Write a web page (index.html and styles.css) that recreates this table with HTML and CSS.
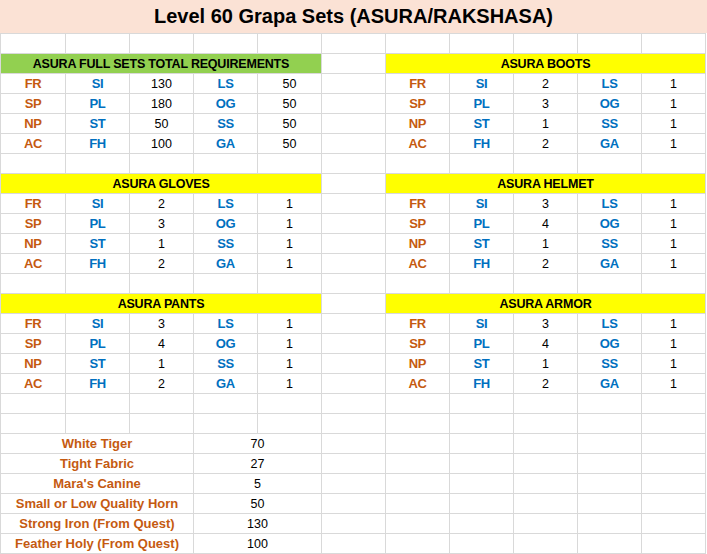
FILE: index.html
```html
<!DOCTYPE html>
<html>
<head>
<meta charset="utf-8">
<title>Level 60 Grapa Sets</title>
<link rel="stylesheet" href="styles.css">
</head>
<body>
<div class="title">Level 60 Grapa Sets (ASURA/RAKSHASA)</div>
<div class="sheet">
  <!-- row 2 -->
  <div></div><div></div><div></div><div></div><div></div><div></div><div></div><div></div><div></div><div></div><div></div>
  <!-- row 3 -->
  <div class="hd green">ASURA FULL SETS TOTAL REQUIREMENTS</div><div></div><div class="hd yellow">ASURA BOOTS</div>
  <!-- rows 4-7 -->
  <div class="k">FR</div><div class="b">SI</div><div class="n">130</div><div class="b">LS</div><div class="n">50</div><div></div><div class="k">FR</div><div class="b">SI</div><div class="n">2</div><div class="b">LS</div><div class="n">1</div>
  <div class="k">SP</div><div class="b">PL</div><div class="n">180</div><div class="b">OG</div><div class="n">50</div><div></div><div class="k">SP</div><div class="b">PL</div><div class="n">3</div><div class="b">OG</div><div class="n">1</div>
  <div class="k">NP</div><div class="b">ST</div><div class="n">50</div><div class="b">SS</div><div class="n">50</div><div></div><div class="k">NP</div><div class="b">ST</div><div class="n">1</div><div class="b">SS</div><div class="n">1</div>
  <div class="k">AC</div><div class="b">FH</div><div class="n">100</div><div class="b">GA</div><div class="n">50</div><div></div><div class="k">AC</div><div class="b">FH</div><div class="n">2</div><div class="b">GA</div><div class="n">1</div>
  <!-- row 8 -->
  <div></div><div></div><div></div><div></div><div></div><div></div><div></div><div></div><div></div><div></div><div></div>
  <!-- row 9 -->
  <div class="hd yellow">ASURA GLOVES</div><div></div><div class="hd yellow">ASURA HELMET</div>
  <!-- rows 10-13 -->
  <div class="k">FR</div><div class="b">SI</div><div class="n">2</div><div class="b">LS</div><div class="n">1</div><div></div><div class="k">FR</div><div class="b">SI</div><div class="n">3</div><div class="b">LS</div><div class="n">1</div>
  <div class="k">SP</div><div class="b">PL</div><div class="n">3</div><div class="b">OG</div><div class="n">1</div><div></div><div class="k">SP</div><div class="b">PL</div><div class="n">4</div><div class="b">OG</div><div class="n">1</div>
  <div class="k">NP</div><div class="b">ST</div><div class="n">1</div><div class="b">SS</div><div class="n">1</div><div></div><div class="k">NP</div><div class="b">ST</div><div class="n">1</div><div class="b">SS</div><div class="n">1</div>
  <div class="k">AC</div><div class="b">FH</div><div class="n">2</div><div class="b">GA</div><div class="n">1</div><div></div><div class="k">AC</div><div class="b">FH</div><div class="n">2</div><div class="b">GA</div><div class="n">1</div>
  <!-- row 14 -->
  <div></div><div></div><div></div><div></div><div></div><div></div><div></div><div></div><div></div><div></div><div></div>
  <!-- row 15 -->
  <div class="hd yellow">ASURA PANTS</div><div></div><div class="hd yellow">ASURA ARMOR</div>
  <!-- rows 16-19 -->
  <div class="k">FR</div><div class="b">SI</div><div class="n">3</div><div class="b">LS</div><div class="n">1</div><div></div><div class="k">FR</div><div class="b">SI</div><div class="n">3</div><div class="b">LS</div><div class="n">1</div>
  <div class="k">SP</div><div class="b">PL</div><div class="n">4</div><div class="b">OG</div><div class="n">1</div><div></div><div class="k">SP</div><div class="b">PL</div><div class="n">4</div><div class="b">OG</div><div class="n">1</div>
  <div class="k">NP</div><div class="b">ST</div><div class="n">1</div><div class="b">SS</div><div class="n">1</div><div></div><div class="k">NP</div><div class="b">ST</div><div class="n">1</div><div class="b">SS</div><div class="n">1</div>
  <div class="k">AC</div><div class="b">FH</div><div class="n">2</div><div class="b">GA</div><div class="n">1</div><div></div><div class="k">AC</div><div class="b">FH</div><div class="n">2</div><div class="b">GA</div><div class="n">1</div>
  <!-- rows 20-21 -->
  <div></div><div></div><div></div><div></div><div></div><div></div><div></div><div></div><div></div><div></div><div></div>
  <div></div><div></div><div></div><div></div><div></div><div></div><div></div><div></div><div></div><div></div><div></div>
  <!-- rows 22-27 -->
  <div class="mat">White Tiger</div><div class="val">70</div><div></div><div></div><div></div><div></div><div></div><div></div>
  <div class="mat">Tight Fabric</div><div class="val">27</div><div></div><div></div><div></div><div></div><div></div><div></div>
  <div class="mat">Mara's Canine</div><div class="val">5</div><div></div><div></div><div></div><div></div><div></div><div></div>
  <div class="mat">Small or Low Quality Horn</div><div class="val">50</div><div></div><div></div><div></div><div></div><div></div><div></div>
  <div class="mat">Strong Iron (From Quest)</div><div class="val">130</div><div></div><div></div><div></div><div></div><div></div><div></div>
  <div class="mat">Feather Holy (From Quest)</div><div class="val">100</div><div></div><div></div><div></div><div></div><div></div><div></div>
</div>
</body>
</html>
```

FILE: styles.css
```css
html, body {
  margin: 0;
  padding: 0;
  background: #fff;
}

body {
  width: 707px;
  font-family: "Liberation Sans", Arial, sans-serif;
}

.title {
  height: 33px;
  background: #fbe2d5;
  display: flex;
  align-items: center;
  justify-content: center;
  font-weight: bold;
  font-size: 20px;
  color: #000;
}

.sheet {
  width: 704px;
  display: grid;
  grid-template-columns: 64px repeat(10, 63px);
  grid-template-rows: repeat(26, 19px);
  gap: 1px;
  padding: 1px;
  background: #d9d9d9;
}

.sheet > div {
  background: #fff;
  display: flex;
  align-items: center;
  justify-content: center;
  font-size: 12.5px;
  white-space: nowrap;
  color: #000;
}

.sheet > .hd {
  grid-column: span 5;
  font-weight: bold;
  letter-spacing: -0.2px;
}

.sheet > .green {
  background: #92d050;
}

.sheet > .yellow {
  background: #ffff00;
}

.sheet > .k {
  color: #c55a11;
  font-weight: bold;
  font-size: 13px;
  letter-spacing: -0.3px;
}

.sheet > .b {
  color: #0070c0;
  font-weight: bold;
  font-size: 13px;
  letter-spacing: -0.3px;
}

.sheet > .n {
  font-size: 12.5px;
}

.sheet > .mat {
  grid-column: span 3;
  color: #c55a11;
  font-weight: bold;
  font-size: 13px;
}

.sheet > .val {
  grid-column: span 2;
}
```
